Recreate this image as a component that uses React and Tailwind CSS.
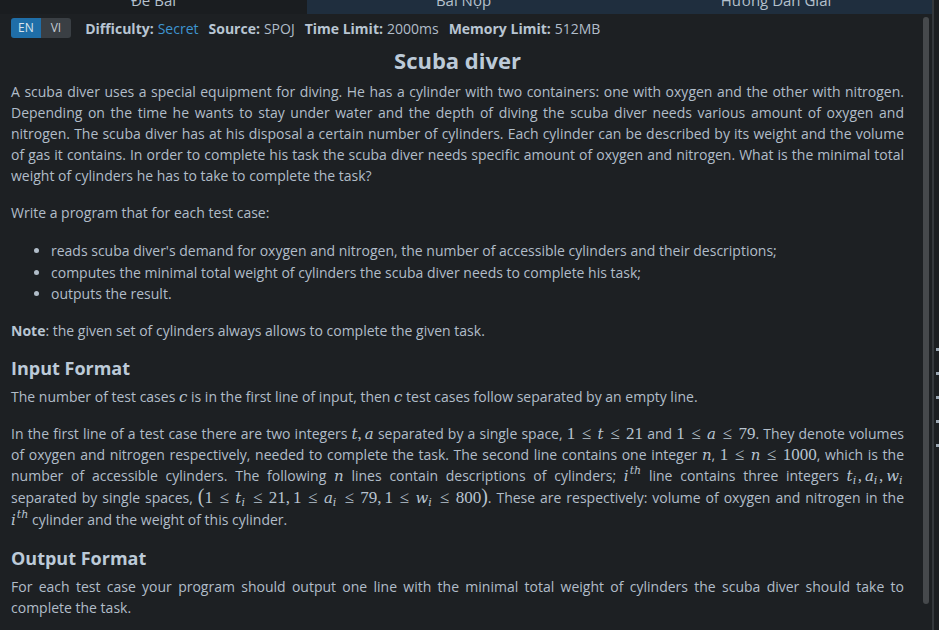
import React from "react";

const M = ({ children }) => (
  <span className="leading-none text-[17px] text-[#b8c4d0]" style={{ fontFamily: '"Liberation Serif", "DejaVu Serif", serif' }}>
    {children}
  </span>
);
const I = ({ children }) => (
  <span className="italic text-[15px]" style={{ fontFamily: '"DejaVu Serif", "Liberation Serif", serif' }}>{children}</span>
);
const Sub = ({ children }) => (
  <span className="relative top-[3px] text-[11px] italic leading-none mr-[1.5px]" style={{ fontFamily: '"DejaVu Serif", serif' }}>{children}</span>
);
const Sup = ({ children }) => (
  <span className="relative -top-[7px] text-[11px] italic leading-none ml-[1px]" style={{ fontFamily: '"DejaVu Serif", serif' }}>{children}</span>
);
const le = <span className="inline-block w-[13px] text-center mx-[4.7px]">≤</span>;
const cm = <span className="mr-[3px]">,</span>;

export default function App() {
  return (
    <div className="w-[939px] h-[630px] overflow-hidden bg-[#1d2023] flex text-[#b1bdc9]" style={{ fontFamily: '"Open Sans", "Noto Sans", sans-serif' }}>
      <div className="w-[932px] flex flex-col">
        {/* tabs */}
        <div className="h-[14px] flex overflow-hidden shrink-0 text-[15px] text-[#b4c0cc]">
          <div className="w-[307px] bg-[#1a1d20] flex justify-center"><span className="-mt-[11px] leading-[22px]">Đề Bài</span></div>
          <div className="w-[313px] bg-[#1f2e3e] flex justify-center"><span className="-mt-[11px] leading-[22px]">Bài Nộp</span></div>
          <div className="flex-1 bg-[#1f2e3e] flex justify-center"><span className="-mt-[11px] leading-[22px]">Hướng Dẫn Giải</span></div>
        </div>
        <div className="flex flex-1 min-h-0">
          <div className="flex-1 pl-[11px] pr-[16px] text-[14px] leading-[21px]">
            {/* info row */}
            <div className="flex items-center mt-[4px] h-[20px] text-[14px]">
              <div className="flex rounded-[3px] overflow-hidden text-[12px] h-[20px] leading-[20px]">
                <span className="bg-[#1f6ea8] text-[#d8e4ee] px-[7px]">EN</span>
                <span className="bg-[#3a3f44] text-[#c4ccd4] px-[10px]">VI</span>
              </div>
              <span className="ml-[14px] font-bold text-[#b8c5d2]">Difficulty:</span>
              <span className="ml-[4px] text-[#3d95d0]">Secret</span>
              <span className="ml-[10px] font-bold text-[#b8c5d2]">Source:</span>
              <span className="ml-[4px]">SPOJ</span>
              <span className="ml-[10px] font-bold text-[#b8c5d2]">Time Limit:</span>
              <span className="ml-[4px]">2000ms</span>
              <span className="ml-[10px] font-bold text-[#b8c5d2]">Memory Limit:</span>
              <span className="ml-[4px]">512MB</span>
            </div>
            <h1 className="mt-[7px] mb-[6px] text-center text-[22px] leading-[30px] font-bold text-[#bccad8]">Scuba diver</h1>
            <p className="text-justify mb-[16px]">
              A scuba diver uses a special equipment for diving. He has a cylinder with two containers: one with oxygen and the other with nitrogen. Depending on the time he wants to stay under water and the depth of diving the scuba diver needs various amount of oxygen and nitrogen. The scuba diver has at his disposal a certain number of cylinders. Each cylinder can be described by its weight and the volume of gas it contains. In order to complete his task the scuba diver needs specific amount of oxygen and nitrogen. What is the minimal total weight of cylinders he has to take to complete the task?
            </p>
            <p className="mb-[17px]">Write a program that for each test case:</p>
            <ul className="list-disc pl-[40px] mb-[15px] leading-[21.5px]">
              <li>reads scuba diver's demand for oxygen and nitrogen, the number of accessible cylinders and their descriptions;</li>
              <li>computes the minimal total weight of cylinders the scuba diver needs to complete his task;</li>
              <li>outputs the result.</li>
            </ul>
            <p className="mb-[15px]"><b className="text-[#b8c5d2]">Note</b>: the given set of cylinders always allows to complete the given task.</p>
            <h2 className="text-[18px] leading-[25px] font-bold text-[#bccad8] mb-[5px]">Input Format</h2>
            <p className="mb-[16px]">
              The number of test cases <M><I>c</I></M> is in the first line of input, then <M><I>c</I></M> test cases follow separated by an empty line.
            </p>
            <p className="text-justify mb-[16px] leading-[21.3px]">
              In the first line of a test case there are two integers <M><I>t</I>{cm}<I>a</I></M> separated by a single space, <M>1{le}<I>t</I>{le}21</M> and <M>1{le}<I>a</I>{le}79</M>. They denote volumes of oxygen and nitrogen respectively, needed to complete the task. The second line contains one integer <M><I>n</I></M>, <M>1{le}<I>n</I>{le}1000</M>, which is the number of accessible cylinders. The following <M><I>n</I></M> lines contain descriptions of cylinders; <M><I>i</I><Sup>th</Sup></M> line contains three integers <M><I>t</I><Sub>i</Sub>{cm}<I>a</I><Sub>i</Sub>{cm}<I>w</I><Sub>i</Sub></M> {"separated\u00a0by"} single spaces, <M><span className="text-[20px] leading-none">(</span>1{le}<I>t</I><Sub>i</Sub>{le}21{cm}1{le}<I>a</I><Sub>i</Sub>{le}79{cm}1{le}<I>w</I><Sub>i</Sub>{le}800<span className="text-[20px] leading-none">)</span></M>. These are respectively: volume of oxygen and nitrogen in the <M><I>i</I><Sup>th</Sup></M>{"\u00a0cylinder"} and the weight of this cylinder.
            </p>
            <h2 className="text-[18px] leading-[25px] font-bold text-[#bccad8] mb-[5px]">Output Format</h2>
            <p className="text-justify">
              For each test case your program should output one line with the minimal total weight of cylinders the scuba diver should take to complete the task.
            </p>
          </div>
          {/* scrollbar */}
          <div className="w-[12px] pt-[3px] flex justify-start pl-[3px]">
            <div className="w-[6px] h-[587px] rounded-[3px] bg-[#46494c]" />
          </div>
        </div>
      </div>
      <div className="w-[2px] bg-[#34383c]" />
      <div className="flex-1 bg-[#1b1e21] flex flex-col items-end pt-[348px] gap-[21px]">
        <div className="w-[3px] h-[3px] bg-[#9aa6b2]" />
        <div className="w-[3px] h-[3px] bg-[#9aa6b2]" />
        <div className="w-[3px] h-[3px] bg-[#9aa6b2]" />
        <div className="w-[3px] h-[3px] bg-[#9aa6b2]" />
        <div className="w-[3px] h-[3px] bg-[#9aa6b2]" />
      </div>
    </div>
  );
}
